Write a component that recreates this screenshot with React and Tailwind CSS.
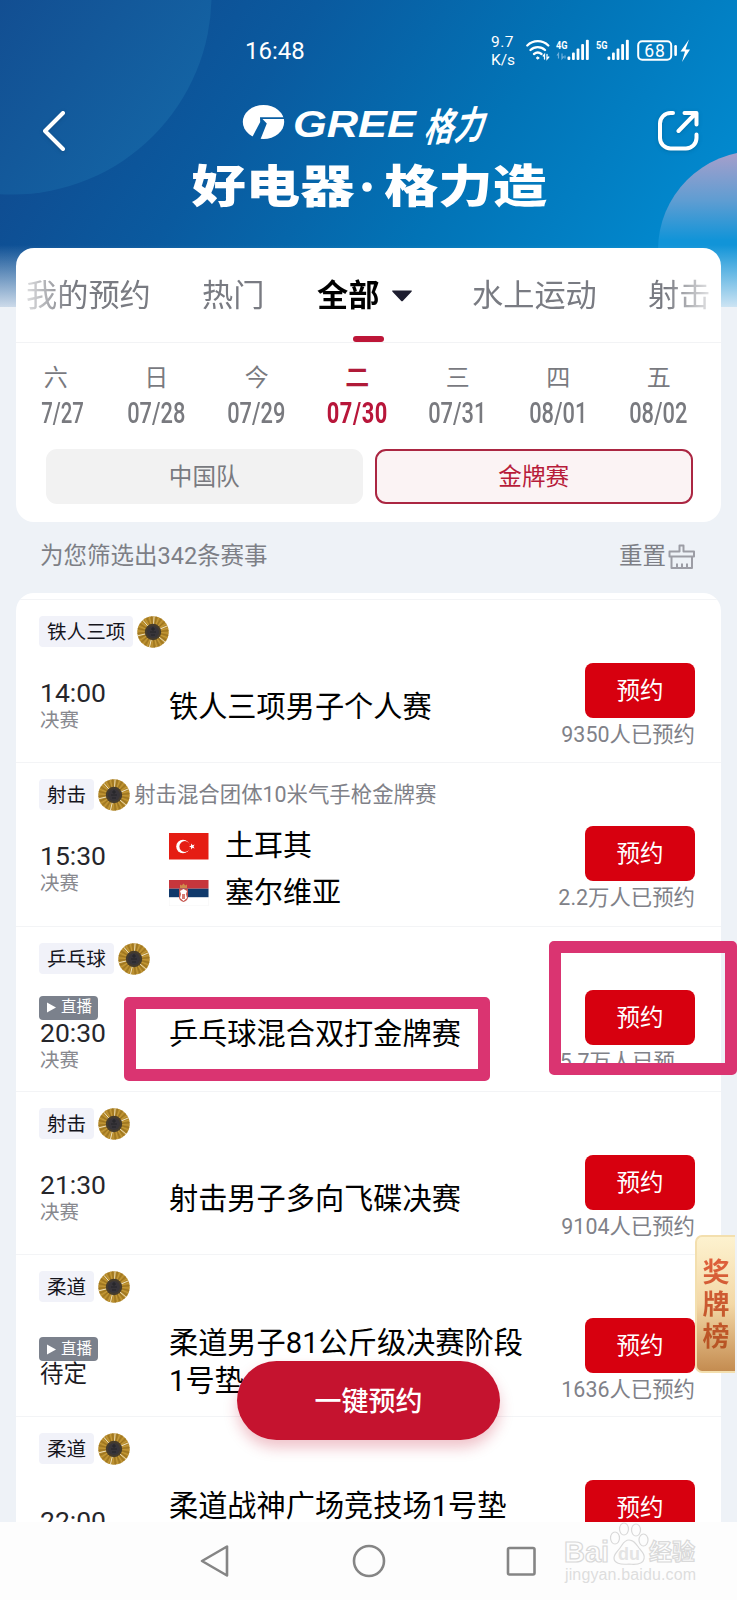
const MATCHES = [
  { sport: '铁人三项', time: '14:00', stage: '决赛', title: '铁人三项男子个人赛', count: '9350人已预约', height: 'h-[163px]' },
  {
    sport: '射击', note: '射击混合团体10米气手枪金牌赛', time: '15:30', stage: '决赛',
    teams: [{ flag: 'tr', name: '土耳其' }, { flag: 'rs', name: '塞尔维亚' }],
    count: '2.2万人已预约', height: 'h-[164px]',
  },
  { sport: '乒乓球', live: true, time: '20:30', stage: '决赛', title: '乒乓球混合双打金牌赛', count: '5.7万人已预', cut: true, height: 'h-[165px]' },
  { sport: '射击', time: '21:30', stage: '决赛', title: '射击男子多向飞碟决赛', count: '9104人已预约', height: 'h-[163px]' },
  { sport: '柔道', live: true, time: '待定', title: '柔道男子81公斤级决赛阶段1号垫', count: '1636人已预约', height: 'h-[162px]' },
  { sport: '柔道', time: '22:00', title: '柔道战神广场竞技场1号垫', twoLines: true, count: '', height: 'h-[163px]' },
]

const DAYS = [
  { day: '六', date: '7/27', cut: true },
  { day: '日', date: '07/28' },
  { day: '今', date: '07/29' },
  { day: '二', date: '07/30', active: true },
  { day: '三', date: '07/31' },
  { day: '四', date: '08/01' },
  { day: '五', date: '08/02' },
]

function HeaderBackdrop() {
  return (
    <svg className="absolute left-0 top-0" width="737" height="307" viewBox="0 0 737 307">
      <defs>
        <linearGradient id="sky" gradientUnits="userSpaceOnUse" x1="60" y1="60" x2="560" y2="400">
          <stop offset="0" stopColor="#104b90" />
          <stop offset="0.3" stopColor="#0a5a9f" />
          <stop offset="0.65" stopColor="#0273b6" />
          <stop offset="1" stopColor="#0288cd" />
        </linearGradient>
        <linearGradient id="orbLeft" x1="0.45" y1="0.4" x2="1" y2="0.8">
          <stop offset="0" stopColor="#124b8f" />
          <stop offset="1" stopColor="#1466a6" />
        </linearGradient>
        <linearGradient id="orbRight" x1="0" y1="0" x2="0" y2="1">
          <stop offset="0" stopColor="#a99fcb" />
          <stop offset="0.25" stopColor="#5f9dd2" />
          <stop offset="0.45" stopColor="#1194d8" />
        </linearGradient>
        <linearGradient id="fade" x1="0" y1="0" x2="0" y2="1">
          <stop offset="0" stopColor="#eef2f8" stopOpacity="0" />
          <stop offset="1" stopColor="#eef2f8" stopOpacity="0.85" />
        </linearGradient>
      </defs>
      <rect width="737" height="307" fill="url(#sky)" />
      <circle cx="12" cy="-5" r="199.500" fill="url(#orbLeft)" />
      <circle cx="757" cy="250" r="99" fill="url(#orbRight)" />
      <rect y="245" width="737" height="62" fill="url(#fade)" />
    </svg>
  )
}

function Signal({ label, dim }) {
  return (
    <svg width="33" height="22" viewBox="0 0 33 22" fill="#fff">
      <text x="0" y="9.500" fontFamily="Roboto, sans-serif" fontSize="11.500" fontWeight="700" textLength="11.500" lengthAdjust="spacingAndGlyphs">{label}</text>
      {dim && <path d="M2.500 19.500v-5l-1.500 2M6 14.500v5l1.700-2M9 19.500v-3" stroke="#6fb0dc" strokeWidth="1.200" fill="none" />}
      <rect x="11.500" y="17.500" width="2.800" height="3.500" rx="1" />
      <rect x="16" y="13.500" width="2.800" height="7.500" rx="1" />
      <rect x="20.600" y="9.500" width="2.800" height="11.500" rx="1" />
      <rect x="25.200" y="5" width="2.800" height="16" rx="1" />
      <rect x="29.900" y="0.800" width="2.900" height="20.200" rx="1" />
    </svg>
  )
}

function StatusBar() {
  return (
    <div className="flex h-[100px] pl-[245px] text-white">
      <div className="mt-[37px] w-[246px] text-[24px] leading-[28px]">16:48</div>
      <div className="mt-[33px] w-[35px] text-[15.500px] leading-[18px]"><span className="tracking-[0.500px]">9.7</span><br />K/s</div>
      <svg className="mt-[39px]" width="25" height="22" viewBox="0 0 25 22" fill="none" stroke="#fff" strokeWidth="2.300" strokeLinecap="round">
        <path d="M1.300 6.500a15 15 0 0 1 21 0M4.500 11a10.500 10.500 0 0 1 14.500 0M8 15a6 6 0 0 1 7.500 0" />
        <circle cx="11.700" cy="19" r="1.100" fill="#fff" strokeWidth="1" />
        <path d="M18.500 20v-4.500l-1.300 1.500M21 15.500V20l1.800-2" strokeWidth="1.300" />
      </svg>
      <div className="mt-[39px] ml-[5px] flex gap-[7px]">
        <Signal label="4G" dim />
        <Signal label="5G" />
      </div>
      <svg className="mt-[39px] ml-[8px]" width="54" height="24" viewBox="0 0 54 24">
        <rect x="1.200" y="2.200" width="33" height="18.500" rx="4" fill="none" stroke="#fff" strokeWidth="2" />
        <text x="17.900" y="17.600" textAnchor="middle" fontFamily="Roboto, sans-serif" fontSize="17.500" letterSpacing="0.800" fill="#fff">68</text>
        <rect x="37.300" y="6" width="2.600" height="11" rx="1.200" fill="#fff" />
        <path d="M52 0.500 43.500 12.500h4.500l-3 10.500L53 10.500h-4.500z" fill="#fff" />
      </svg>
    </div>
  )
}

function Brand() {
  return (
    <svg className="-mt-[1px]" width="360" height="118" viewBox="0 0 360 118" fill="#fff">
      {/* emblem: a disc split by a slanted pillar and a bar */}
      <g transform="translate(52 6)">
        <ellipse cx="20.500" cy="17" rx="20.700" ry="17" />
        <path d="M17 12.200h25.500v1.900H19.500l4.300 4.300L17 35.500H7.500L17.200 17z" fill="#085ea3" />
      </g>
      <text x="102" y="38" fontFamily="Liberation Sans, Arial, sans-serif" fontWeight="700" fontStyle="italic" fontSize="36" textLength="123" lengthAdjust="spacingAndGlyphs">GREE</text>
      <text transform="translate(232 43) rotate(-4) skewX(-20)" fontFamily="Noto Sans CJK SC, sans-serif" fontWeight="700" fontSize="38" textLength="60" lengthAdjust="spacingAndGlyphs">格力</text>
      <g fontFamily="Noto Sans CJK SC, sans-serif" fontWeight="900" fontSize="45">
        <text x="0.500" y="104" textLength="163" lengthAdjust="spacingAndGlyphs">好电器</text>
        <circle cx="176" cy="88" r="4.800" />
        <text x="193" y="104" textLength="163" lengthAdjust="spacingAndGlyphs">格力造</text>
      </g>
    </svg>
  )
}

function TitleBar() {
  return (
    <div className="flex h-[148px] items-start">
      <svg className="mt-[9px] ml-[40px] drop-shadow" width="28" height="44" viewBox="0 0 28 44" fill="none" stroke="#fff" strokeWidth="4" strokeLinecap="round" strokeLinejoin="round">
        <path d="M23 4 5 22l18 18" />
      </svg>
      <div className="ml-[123px] w-[464px]"><Brand /></div>
      <svg className="mt-[9px] drop-shadow" width="46" height="46" viewBox="0 0 46 46" fill="none" stroke="#fff" strokeWidth="4" strokeLinecap="round" strokeLinejoin="round">
        <path d="M18 4h-2.500A10.500 10.500 0 0 0 5 14.500V29a10.500 10.500 0 0 0 10.500 10.500H31A10.500 10.500 0 0 0 41.500 29v-3.500M23.500 22 40 5M29.500 4h12v11.500" />
      </svg>
    </div>
  )
}

function Tabs() {
  return (
    <div className="h-[95px] border-b border-[#f2f3f5]">
      <div className="ml-[10px] flex h-[94px] w-[685px] overflow-hidden text-[31.200px] leading-[95px] whitespace-nowrap text-[#797b82] [mask-image:linear-gradient(to_right,rgba(0,0,0,0.25)_0,black_45px,black_640px,rgba(0,0,0,0.1)_690px)]">
        <div className="w-[176px] shrink-0">我的预约</div>
        <div className="w-[115px] shrink-0">热门</div>
        <div className="flex w-[155px] shrink-0 flex-col">
          <div className="flex h-[88px] items-center gap-[13px] pt-[7px] font-bold text-black">
            全部
            <svg width="20" height="12" viewBox="0 0 20 12"><path d="M1 .5h18c1 0 1 .6.500 1.200L11 10.800c-.6.700-1.400.700-2 0L.5 1.700C0 1.100 0 .5 1 .5z" fill="#1e1e30" /></svg>
          </div>
          <div className="ml-[36px] h-[6px] w-[31px] rounded-full bg-[#bd1638]" />
        </div>
        <div className="w-[176px] shrink-0">水上运动</div>
        <div className="shrink-0">射击</div>
      </div>
    </div>
  )
}

function Calendar() {
  return (
    <div className="ml-[-10.500px] flex h-[106px] pt-[19px]">
      {DAYS.map((d) => (
        <div key={d.date} className={`flex w-[100.500px] shrink-0 flex-col items-center ${d.active ? 'font-bold text-[#b01a38]' : 'text-[#797a7f]'}`}>
          <div className="text-[24px] leading-[33px]">{d.day}</div>
          <div className={`flex h-[36px] w-[56px] items-center ${d.cut ? 'justify-end' : 'justify-center'}`}>
            <span className={`inline-block text-[29.500px] leading-[36px] ${d.cut ? 'origin-right scale-x-[0.69]' : 'scale-x-[0.74]'} ${d.active ? 'tracking-[0.800px] text-[#b8163a]' : 'font-medium'}`}>{d.date}</span>
          </div>
        </div>
      ))}
    </div>
  )
}

function Medal() {
  return (
    <svg className="shrink-0" width="32" height="32" viewBox="-16 -16 32 32">
      <circle r="15.700" fill="#b08527" />
      {Array.from({ length: 40 }, (_, i) => (
        <line
          key={i} x1="0" y1="-7" x2="0" y2="-15.600" strokeWidth="0.900"
          stroke={i % 7 === 0 ? '#f3e6c4' : i % 2 ? '#9a7320' : '#c79d3c'}
          transform={`rotate(${i * 9 + 4})`}
        />
      ))}
      <circle r="8.200" fill="#463c2c" />
      <circle r="6" fill="#38353a" />
      <path d="M-2-3h4M0-5v4M-3 0h6M-2 3h4" stroke="#232227" strokeWidth="0.900" />
    </svg>
  )
}

function Flag({ code }) {
  if (code === 'tr') {
    return (
      <svg width="40" height="27" viewBox="0 0 40 27">
        <rect width="39.500" height="26.500" fill="#e51d13" />
        <circle cx="14" cy="13.500" r="6.800" fill="#fff" />
        <circle cx="15.800" cy="13.500" r="5.400" fill="#e51d13" />
        <path d="m20 13.500 2-.8.200-2.200 1.400 1.700 2-.6-1.100 1.900 1.100 1.900-2-.6-1.400 1.700-.2-2.200z" fill="#fff" />
      </svg>
    )
  }
  return (
    <svg width="40" height="26" viewBox="0 0 40 26">
      <rect width="39.500" height="26" fill="#f4f4f4" />
      <rect x="0.500" width="38.500" height="25.500" fill="#fff" />
      <rect width="39.500" height="8.700" fill="#c6363c" />
      <rect y="8.700" width="39.500" height="8.500" fill="#10396b" />
      <path d="M10 8.500h9v8.500c0 3-2 4-4.500 5-2.500-1-4.500-2-4.500-5z" fill="#c6564f" />
      <path d="m14.500 9 3.500 2-1 3 1 4-3.500 3-3.500-3 1-4-1-3z" fill="#fff" />
      <path d="M13 14h3v5h-3z" fill="#d77a72" />
      <path d="M11 8V4.500l1.700 1 1.800-2 1.800 2 1.700-1V8z" fill="#d08a4b" />
    </svg>
  )
}

function LiveBadge() {
  return (
    <div className="mt-[2px] -ml-px flex h-[24px] w-[59px] items-center gap-[5px] rounded-[4px] bg-[#7b818c] pl-[8px] text-[15.500px] leading-[25px] text-white">
      <svg width="9" height="11" viewBox="0 0 9 11"><path d="M0 .5 9 5.500 0 10.500z" fill="#fff" /></svg>
      直播
    </div>
  )
}

function MatchRow({ match }) {
  return (
    <div className={`shrink-0 border-t border-[#f3f4f6] pt-[16px] pl-[23px] ${match.height}`}>
      <div className="flex h-[31px] items-center">
        <div className="mr-[4px] h-[31px] rounded-[4px] bg-[#f1f2f9] px-[8px] text-[19.600px] leading-[33px] text-[#15151d]">{match.sport}</div>
        <Medal />
        {match.note && <div className="ml-[4px] text-[21.400px] leading-[32px] text-[#808188]">{match.note}</div>}
      </div>
      <div className="flex h-[118px] items-center">
        <div className={`w-[130px] pl-px ${match.time === '待定' ? '' : 'pt-[2px]'}`}>
          {match.live && <LiveBadge />}
          <div className={match.time === '待定' ? 'text-[23.500px] leading-[26px] text-[#1b1b1f]' : `text-[26.500px] leading-[26px] text-[#26262b] ${match.twoLines ? 'pb-[7px]' : ''}`}>{match.time}</div>
          {match.stage && <div className="text-[19.400px] leading-[29px] text-[#87888e]">{match.stage}</div>}
        </div>
        {match.teams ? (
          <div className="w-[370px] pt-px">
            {match.teams.map((t) => (
              <div key={t.flag} className="flex h-[47px] items-center gap-[16px] text-[29px] leading-[47px] text-black">
                <Flag code={t.flag} />
                {t.name}
              </div>
            ))}
          </div>
        ) : (
          <div className={`w-[370px] text-[29.200px] leading-[38px] text-black ${match.twoLines ? 'h-[72px]' : 'pt-px'}`}>{match.title}</div>
        )}
        <div className="flex w-[156px] flex-col items-end">
          <button className="h-[55px] w-[110px] rounded-[8px] bg-[#d7000f] text-[23.500px] leading-[56px] text-white">预约</button>
          <div className={`h-[31px] text-[21.400px] leading-[34px] whitespace-nowrap text-[#808188] ${match.cut ? 'pr-[20px]' : ''}`}>{match.count}</div>
        </div>
      </div>
    </div>
  )
}

function Watermark() {
  return (
    <svg className="ml-[27px]" width="140" height="64" viewBox="0 0 140 64" fill="#fdfdfd" stroke="#d9d9d9" strokeWidth="1.200">
      <text x="0" y="40" fontFamily="Liberation Sans, Arial, sans-serif" fontWeight="700" fontSize="29" textLength="45" lengthAdjust="spacingAndGlyphs">Bai</text>
      <ellipse cx="51" cy="16" rx="4.500" ry="6" />
      <ellipse cx="60" cy="7" rx="4.500" ry="6" />
      <ellipse cx="72" cy="8" rx="4.500" ry="6" />
      <ellipse cx="79.500" cy="18" rx="4.500" ry="6" />
      <path d="M65 18c5 0 7 4 10 8 4 5 6 7 5 11-1 5-6 6-15 5-9 1-15-1-15-6 0-4 3-6 6-10s4-8 9-8z" />
      <text x="54" y="38" fontFamily="Liberation Sans, Arial, sans-serif" fontWeight="700" fontSize="18" fill="#e4e4e4" stroke="none">du</text>
      <text x="85" y="38" fontFamily="Noto Sans CJK SC, sans-serif" fontWeight="700" fontSize="23">经验</text>
      <text x="1" y="58" fontFamily="Liberation Sans, Arial, sans-serif" fontSize="16" textLength="131" fill="#dedede" stroke="none">jingyan.baidu.com</text>
    </svg>
  )
}

function NavBar() {
  return (
    <div className="relative z-20 flex h-[78px] items-start bg-[#fdfdfd]">
      <svg className="mt-[22px] ml-[199px]" width="32" height="34" viewBox="0 0 32 34" fill="none" stroke="#858585" strokeWidth="2.600" strokeLinejoin="round">
        <path d="M3 17 28 2.500v29z" />
      </svg>
      <svg className="mt-[22px] ml-[120.500px]" width="34" height="34" viewBox="0 0 34 34" fill="none" stroke="#858585" strokeWidth="2.600">
        <circle cx="17" cy="17" r="15" />
      </svg>
      <svg className="mt-[24px] ml-[120.500px]" width="31" height="31" viewBox="0 0 31 31" fill="none" stroke="#858585" strokeWidth="2.600">
        <rect x="2" y="2" width="26.500" height="26.500" rx="1.500" />
      </svg>
      <Watermark />
    </div>
  )
}

export default function App() {
  return (
    <div className="relative flex h-[1600px] w-[737px] flex-col overflow-hidden bg-[#eef2f7] font-[Roboto,'Noto_Sans_CJK_SC',sans-serif]">
      <HeaderBackdrop />
      <header className="relative h-[248px] shrink-0">
        <StatusBar />
        <TitleBar />
      </header>

      <section className="relative mx-[16px] h-[274px] shrink-0 overflow-hidden rounded-[18px] bg-white">
        <Tabs />
        <Calendar />
        <div className="flex gap-[12px] pl-[29.500px] text-[23.600px] leading-[56px]">
          <button className="h-[55px] w-[317.500px] rounded-[11px] bg-[#f2f2f2] text-[#797a80]">中国队</button>
          <button className="h-[55px] w-[317.500px] rounded-[11px] border-2 border-[#ab2642] bg-[#fbf3f4] leading-[52px] text-[#b71c3a]">金牌赛</button>
        </div>
      </section>

      <div className="flex h-[71px] shrink-0 items-start justify-between pr-[41px] pl-[40px] text-[23.500px] text-[#7d7f86]">
        <div className="leading-[69px]">为您筛选出342条赛事</div>
        <div className="flex">
          <span className="leading-[69px]">重置</span>
          <svg className="mt-[22px] ml-[2px]" width="28" height="26" viewBox="0 0 28 26" fill="none" stroke="#9c9da5" strokeWidth="2" strokeLinejoin="round">
            <path d="M1.500 7.500h10V1.500h4v6h10.500v5H1.500zM3.500 12.500v11.500h20.500V12.500M9 24v-4.500M14 24v-4.500M19 24v-4.500" />
          </svg>
        </div>
      </div>

      <main className="relative mx-[16px] flex min-h-0 flex-1 flex-col overflow-hidden rounded-t-[18px] bg-white pt-[6px]">
        {MATCHES.map((m, i) => <MatchRow key={i} match={m} />)}
      </main>

      {/* highlight frames */}
      <div className="absolute top-[997px] left-[124px] h-[84px] w-[365.500px] rounded-[5px] border-[12px] border-[#da3471]" />
      <div className="absolute top-[941px] left-[549px] h-[134px] w-[188px] rounded-[5px] border-[12px] border-[#da3471]" />

      <button className="absolute top-[1361px] left-[237px] h-[79px] w-[263px] rounded-full bg-[#c5132f] text-[27px] leading-[82px] font-medium text-white shadow-[0_8px_14px_rgba(197,19,47,0.25)]">一键预约</button>

      <div className="absolute top-[1235px] left-[695px] flex h-[138px] w-[40px] flex-col items-center rounded-l-[7px] border-2 border-r-0 border-[#f3dfae] bg-linear-to-b from-[#fdf2cf] via-[#f3d8a6] to-[#c48c50] pt-[20px]">
        <div className="w-[27px] bg-linear-to-b from-[#e0603c] to-[#b45322] bg-clip-text text-[27px] leading-[32px] font-bold text-transparent">奖<br />牌<br />榜</div>
      </div>

      <NavBar />
    </div>
  )
}
